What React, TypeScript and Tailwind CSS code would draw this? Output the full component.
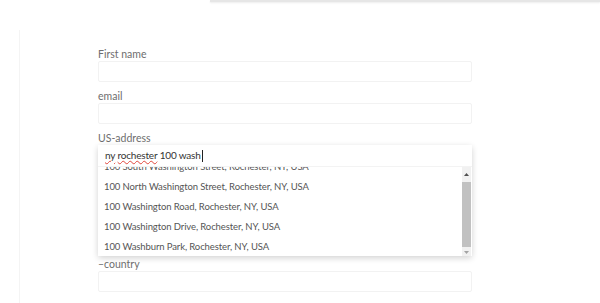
import { FC } from "react";

const suggestions = [
  "100 South Washington Street, Rochester, NY, USA",
  "100 North Washington Street, Rochester, NY, USA",
  "100 Washington Road, Rochester, NY, USA",
  "100 Washington Drive, Rochester, NY, USA",
  "100 Washburn Park, Rochester, NY, USA",
];

const Label: FC<{ text: string }> = ({ text }) => (
  <label className="h-[13px] leading-[13px] text-[10.5px] text-[#6e6e6e]">{text}</label>
);

const Field: FC<{ label: string }> = ({ label }) => (
  <div className="flex flex-col mb-[8px]">
    <Label text={label} />
    <div className="h-[21px] rounded-[2px] border border-[#f2f2f2] bg-white" />
  </div>
);

const App: FC = () => {
  return (
    <div className="w-[600px] h-[303px] overflow-hidden bg-white font-['Lato',sans-serif]">
      <div className="ml-[210px] h-[2px] bg-[#e6e6e6] shadow-[0_1px_2px_rgba(0,0,0,0.08)]" />

      <div className="mt-[28px] ml-[19px] h-[400px] border-l border-[#f4f4f4]">
        <div className="pl-[78px] pt-[18px] w-[452px]">
          <Field label="First name" />
          <Field label="email" />

          <div className="flex flex-col">
            <Label text="US-address" />
            <div className="relative z-10 shadow-[0_2px_6px_rgba(0,0,0,0.18)] rounded-[2px]">
              <div className="h-[22px] flex items-center pl-[7px] bg-white border-b border-[#f3f3f3] text-[10px] tracking-[-0.2px] text-[#333]">
                <span className="underline decoration-wavy decoration-[#e0463c] decoration-[1px] underline-offset-[1px]">ny</span>
                <span>&nbsp;</span>
                <span className="underline decoration-wavy decoration-[#e0463c] decoration-[1px] underline-offset-[1px]">rochester</span>
                <span>&nbsp;100 wash</span>
                <span className="ml-[1px] w-px h-[12px] bg-[#222]" />
              </div>
              <div className="flex h-[89px] bg-white">
                <div className="flex-1 overflow-hidden">
                  <ul className="-mt-[10px] text-[9.5px] tracking-[-0.1px] text-[#555]">
                    {suggestions.map((s) => (
                      <li key={s} className="h-[20px] leading-[20px] pl-[6px] whitespace-nowrap">
                        {s}
                      </li>
                    ))}
                  </ul>
                </div>
                <div className="w-[9px] mr-[1px] flex flex-col bg-[#f1f1f1]">
                  <div className="h-[15px] flex items-center justify-center">
                    <svg width="5" height="3" viewBox="0 0 5 3"><path d="M0 3 L2.5 0 L5 3 Z" fill="#505050" /></svg>
                  </div>
                  <div className="flex-1 bg-[#c1c1c1] mb-[1px]" />
                  <div className="h-[8px] flex items-center justify-center">
                    <svg width="5" height="3" viewBox="0 0 5 3"><path d="M0 0 L2.5 3 L5 0 Z" fill="#a3a3a3" /></svg>
                  </div>
                </div>
              </div>
            </div>
          </div>

          <div className="flex flex-col mt-[2px] mb-[8px]">
            <Label text="–country" />
            <div className="h-[21px] rounded-[2px] border border-[#f2f2f2] bg-white" />
          </div>

          <p className="pl-[6px] text-[10px] leading-[13px] text-[#e4e4e4] whitespace-nowrap">
            Lorem ipsum dolor sit amet consectetur adipiscing elit sed do eiusmod tempor
          </p>
        </div>
      </div>
    </div>
  );
};

export default App;
